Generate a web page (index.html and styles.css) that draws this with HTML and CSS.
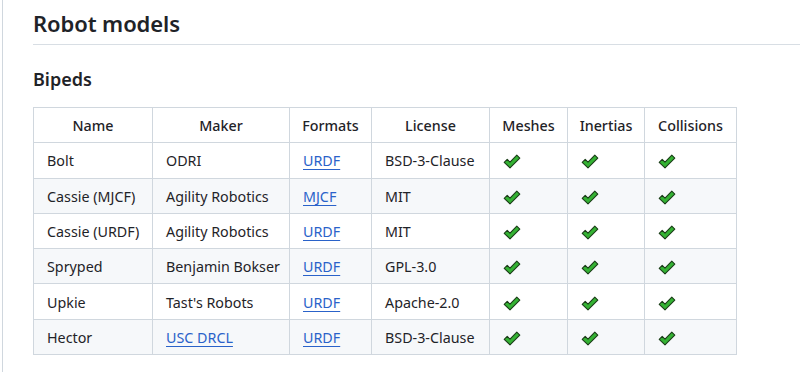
FILE: index.html
```html
<!DOCTYPE html>
<html>
<head>
<meta charset="utf-8">
<link rel="stylesheet" href="styles.css">
</head>
<body>
<svg width="0" height="0" class="defs">
  <defs>
    <symbol id="chk" viewBox="0 0 18 15">
      <path d="M1.2 8.3 L4.2 5.4 L7 8.1 L13.8 1.2 L16.8 4.1 L7 13.8 Z" fill="#34b233" stroke="#1b3d18" stroke-width="1.1" stroke-linejoin="round"/>
    </symbol>
  </defs>
</svg>
<div class="page">
  <h2 class="h2">Robot models</h2>
  <h3 class="h3">Bipeds</h3>
  <table class="tbl">
    <colgroup>
      <col class="c1"><col class="c2"><col class="c3"><col class="c4"><col class="c5"><col class="c6"><col class="c7">
    </colgroup>
    <thead>
      <tr><th>Name</th><th>Maker</th><th>Formats</th><th>License</th><th>Meshes</th><th>Inertias</th><th>Collisions</th></tr>
    </thead>
    <tbody>
      <tr><td>Bolt</td><td>ODRI</td><td><a href="#">URDF</a></td><td>BSD-3-Clause</td><td><svg class="ck"><use href="#chk"/></svg></td><td><svg class="ck"><use href="#chk"/></svg></td><td><svg class="ck"><use href="#chk"/></svg></td></tr>
      <tr><td>Cassie (MJCF)</td><td>Agility Robotics</td><td><a href="#">MJCF</a></td><td>MIT</td><td><svg class="ck"><use href="#chk"/></svg></td><td><svg class="ck"><use href="#chk"/></svg></td><td><svg class="ck"><use href="#chk"/></svg></td></tr>
      <tr><td>Cassie (URDF)</td><td>Agility Robotics</td><td><a href="#">URDF</a></td><td>MIT</td><td><svg class="ck"><use href="#chk"/></svg></td><td><svg class="ck"><use href="#chk"/></svg></td><td><svg class="ck"><use href="#chk"/></svg></td></tr>
      <tr><td>Spryped</td><td>Benjamin Bokser</td><td><a href="#">URDF</a></td><td>GPL-3.0</td><td><svg class="ck"><use href="#chk"/></svg></td><td><svg class="ck"><use href="#chk"/></svg></td><td><svg class="ck"><use href="#chk"/></svg></td></tr>
      <tr><td>Upkie</td><td>Tast's Robots</td><td><a href="#">URDF</a></td><td>Apache-2.0</td><td><svg class="ck"><use href="#chk"/></svg></td><td><svg class="ck"><use href="#chk"/></svg></td><td><svg class="ck"><use href="#chk"/></svg></td></tr>
      <tr><td>Hector</td><td><a href="#">USC DRCL</a></td><td><a href="#">URDF</a></td><td>BSD-3-Clause</td><td><svg class="ck"><use href="#chk"/></svg></td><td><svg class="ck"><use href="#chk"/></svg></td><td><svg class="ck"><use href="#chk"/></svg></td></tr>
    </tbody>
  </table>
</div>
</body>
</html>
```

FILE: styles.css
```css
html, body {
  margin: 0;
  padding: 0;
  background: #fff;
}
body {
  font-family: "Noto Sans", "Open Sans", sans-serif;
  color: #1f2328;
  font-size: 14px;
}
.defs {
  position: absolute;
  width: 0;
  height: 0;
}
.page {
  margin-left: 2px;
  border-left: 1px solid #d0d7de;
  padding: 9px 0 20px 30px;
  min-height: 343px;
}
.h2 {
  margin: 0;
  font-size: 22px;
  font-weight: 600;
  line-height: 28px;
  padding-bottom: 7px;
  border-bottom: 1px solid #d8dee4;
  letter-spacing: -0.1px;
}
.h3 {
  margin: 22px 0 0;
  font-size: 18px;
  font-weight: 600;
  line-height: 24px;
}
.tbl {
  margin-top: 16px;
  border-collapse: collapse;
  table-layout: fixed;
  width: 703px;
}
.c1 { width: 119px; }
.c2 { width: 137px; }
.c3 { width: 82px; }
.c4 { width: 118px; }
.c5 { width: 78px; }
.c6 { width: 77px; }
.c7 { width: 92px; }
.tbl th, .tbl td {
  border: 1px solid #d0d7de;
  padding: 2px 13px 0;
  height: 32.3px;
  line-height: 20px;
  white-space: nowrap;
  font-size: 14.3px;
}
.tbl th {
  font-weight: 500;
  text-align: center;
  padding: 2px 6px 0;
}
.tbl td {
  text-align: left;
}
.tbl tbody tr:nth-child(even) {
  background: #f6f8fa;
}
.tbl a {
  color: #2a62c9;
  text-decoration: underline;
  text-underline-offset: 3px;
}
.ck {
  width: 18px;
  height: 15px;
  vertical-align: -3px;
}
```
